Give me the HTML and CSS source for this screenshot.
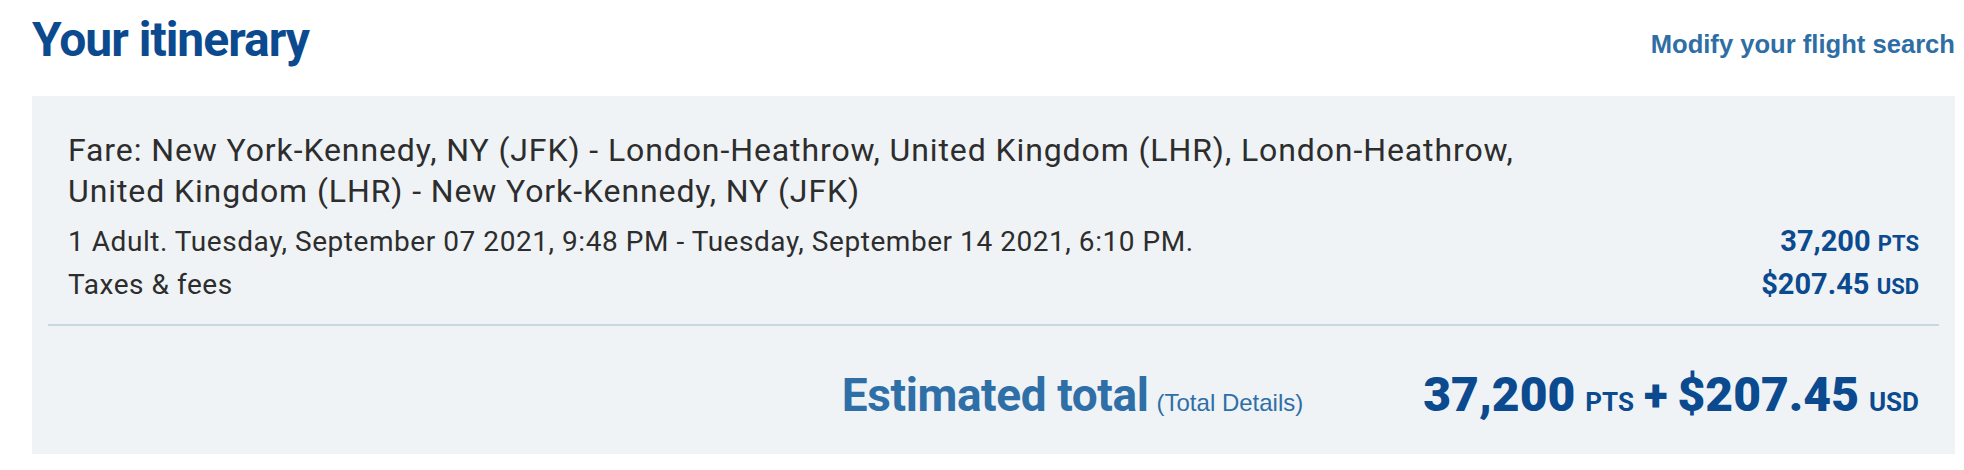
FILE: index.html
```html
<!DOCTYPE html>
<html lang="en">
<head>
  <meta charset="UTF-8" />
  <meta name="viewport" content="width=device-width, initial-scale=1.0" />
  <title>Your itinerary</title>
  <link rel="stylesheet" href="styles.css">
</head>
<body>
  <div class="page">
    <div class="header">
      <h1 class="title">Your itinerary</h1>
      <a class="modify-link" href="#">Modify your flight search</a>
    </div>

    <div class="itinerary">
      <div class="fare-info">
        <p class="fare-route">Fare: New York-Kennedy, NY (JFK) - London-Heathrow, United Kingdom (LHR), London-Heathrow, United Kingdom (LHR) - New York-Kennedy, NY (JFK)</p>
        <div class="fare-details">
          <span class="fare-line">1 Adult. Tuesday, September 07 2021, 9:48 PM - Tuesday, September 14 2021, 6:10 PM.</span>
          <span class="fare-price">37,200 <span class="unit">PTS</span></span>
          <span class="fare-line">Taxes &amp; fees</span>
          <span class="fare-price">$207.45 <span class="unit">USD</span></span>
        </div>
      </div>

      <hr class="divider">

      <div class="total-row">
        <div class="total-label">
          <span class="total-text">Estimated total</span>
          <a class="total-details" href="#">(Total Details)</a>
        </div>
        <div class="total-price">
          <span class="big">37,200</span>
          <span class="big-unit">PTS</span>
          <span class="plus">+</span>
          <span class="big">$207.45</span>
          <span class="big-unit">USD</span>
        </div>
      </div>
    </div>
  </div>
</body>
</html>
```

FILE: styles.css
```css
body {
  margin: 0;
  background: #fff;
  font-family: Roboto, "Liberation Sans", sans-serif;
}
.page {
  padding: 12px 9px 0 32px;
}
.header {
  display: flex;
  justify-content: space-between;
  align-items: flex-start;
}
.title {
  margin: 0;
  font-size: 48px;
  line-height: 56px;
  font-weight: 700;
  letter-spacing: -1px;
  color: #0b4a8f;
}
.modify-link {
  margin-top: 18px;
  font-family: "Liberation Sans", Arial, sans-serif;
  font-size: 25.6px;
  font-weight: bold;
  color: #2f6ea5;
  text-decoration: none;
}
.itinerary {
  margin-top: 28px;
  background: #eff3f6;
  padding: 34px 16px 35px;
}
.fare-info {
  padding: 0 20px;
  color: #2d2d2d;
}
.fare-route {
  margin: 0;
  max-width: 1500px;
  font-size: 32px;
  line-height: 41px;
  letter-spacing: 0.9px;
}
.fare-details {
  margin-top: 9px;
  display: grid;
  grid-template-columns: 1fr auto;
  align-items: baseline;
  line-height: 41px;
}
.fare-line {
  font-size: 28px;
  letter-spacing: 0.55px;
}
.fare-price {
  text-align: right;
  font-size: 29px;
  font-weight: 700;
  color: #0b4a8f;
}
.fare-price .unit {
  font-size: 22px;
}
.divider {
  margin: 17px 0 0;
  border: 0;
  height: 2px;
  background: #c9d7e1;
}
.total-row {
  display: flex;
  justify-content: flex-end;
  align-items: baseline;
  padding: 45px 20px 0;
  line-height: 1;
}
.total-label {
  display: flex;
  align-items: baseline;
  gap: 8px;
  color: #2f6fa7;
}
.total-text {
  font-size: 46px;
  font-weight: 700;
  letter-spacing: -0.4px;
}
.total-details {
  font-family: "Liberation Sans", Arial, sans-serif;
  font-size: 24px;
  color: #2f6fa7;
  text-decoration: none;
}
.total-price {
  margin-left: 120px;
  display: flex;
  align-items: baseline;
  gap: 10px;
  color: #0b4a8f;
}
.big {
  font-size: 48px;
  font-weight: 900;
}
.big-unit {
  font-size: 26px;
  font-weight: 700;
}
.plus {
  font-size: 44px;
  font-weight: 900;
}
```
